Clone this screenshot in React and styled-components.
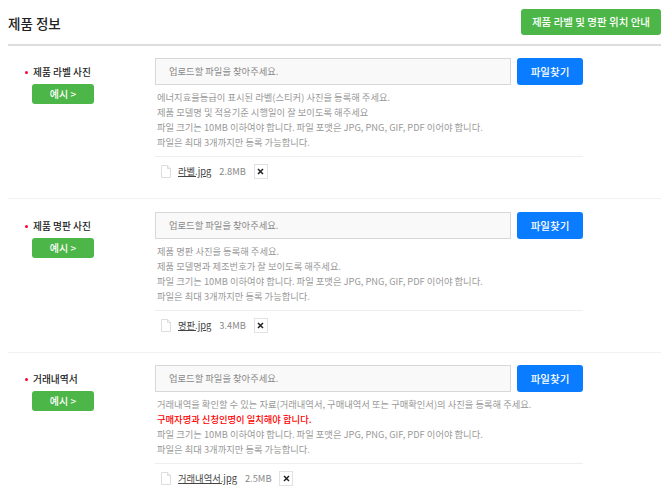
import React from "react";
import styled, { createGlobalStyle } from "styled-components";

const GlobalStyle = createGlobalStyle`
  html, body { margin: 0; padding: 0; background: #fff; }
  body { font-family: "Noto Sans CJK KR", "Noto Sans", sans-serif; overflow: hidden; }
`;

const Page = styled.div`
  width: 672px;
  height: 498px;
  overflow: hidden;
  padding: 9px 11px 0 8px;
  box-sizing: border-box;
`;

const Header = styled.div`
  display: flex;
  justify-content: space-between;
  align-items: flex-start;
  height: 35px;
  border-bottom: 2px solid #ddd;
`;

const Title = styled.h2`
  margin: 4px 0 0;
  font-size: 13.5px;
  line-height: 20px;
  font-weight: 500;
  color: #222;
`;

const GuideButton = styled.button`
  width: 140px;
  height: 26px;
  padding: 0;
  border: 0;
  border-radius: 3px;
  background: #4db648;
  color: #fff;
  font: 500 10.5px/26px "Noto Sans CJK KR", sans-serif;
`;

const Section = styled.section`
  display: grid;
  grid-template-columns: 147px 428px;
  height: ${(p) => p.$height}px;
  padding-top: ${(p) => p.$top}px;
  box-sizing: border-box;
  border-bottom: ${(p) => (p.$last ? "0" : "1px solid #f1f1f1")};
`;

const LabelColumn = styled.div`
  padding: 5px 0 0 17px;
`;

const Label = styled.div`
  display: flex;
  align-items: center;
  height: 18px;
  font-size: 9.7px;
  font-weight: 500;
  color: #222;
`;

const Bullet = styled.span`
  width: 3px;
  height: 3px;
  margin-right: 5px;
  border-radius: 50%;
  background: #f03;
`;

const SampleButton = styled.button`
  display: block;
  width: 62px;
  height: 20px;
  margin: 3px 0 0 7px;
  padding: 0;
  border: 0;
  border-radius: 3px;
  background: #4db648;
  color: #fff;
  font: 500 10px/20px "Noto Sans CJK KR", sans-serif;
`;

const UploadRow = styled.div`
  display: flex;
  gap: 6px;
`;

const Field = styled.div`
  width: 356px;
  height: 27px;
  padding-left: 13px;
  box-sizing: border-box;
  border: 1px solid #d8d8d8;
  background: #f9f9f9;
  color: #888;
  font-size: 9.3px;
  line-height: 25px;
`;

const FindButton = styled.button`
  width: 66px;
  height: 27px;
  padding: 0;
  border: 0;
  border-radius: 3px;
  background: #0a7cff;
  color: #fff;
  font: 500 10.5px/27px "Noto Sans CJK KR", sans-serif;
`;

const Notes = styled.ul`
  list-style: none;
  margin: 5px 0 0;
  padding: 0 0 6px 2px;
  border-bottom: 1px solid #eee;
`;

const Note = styled.li`
  height: 15px;
  font-size: 9.3px;
  line-height: 15px;
  white-space: nowrap;
  color: ${(p) => (p.$alert ? "#f00" : "#999")};
  font-weight: ${(p) => (p.$alert ? 500 : 400)};
`;

const FileRow = styled.div`
  display: flex;
  align-items: center;
  height: 28px;
  padding-left: 6px;
  font-size: 9.3px;
`;

const FileName = styled.a`
  margin-left: 7px;
  color: #444;
  text-decoration: underline;
`;

const FileSize = styled.span`
  margin-left: 8px;
  color: #888;
`;

const RemoveButton = styled.button`
  display: flex;
  align-items: center;
  justify-content: center;
  width: 14px;
  height: 15px;
  margin-left: 8px;
  padding: 0;
  border: 1px solid #e2e2e2;
  background: #fff;
`;

const FileIcon = () => (
  <svg width="10" height="13" viewBox="0 0 10 13" fill="none" stroke="#ddd">
    <path d="M.5.5h6l3 3v9H.5z M6.5.5v3h3" />
  </svg>
);

const CloseIcon = () => (
  <svg width="7" height="7" viewBox="0 0 7 7" stroke="#222" strokeWidth="1.5">
    <path d="M1 1l5 5M6 1l-5 5" />
  </svg>
);

const commonNotes = [
  "파일 크기는 10MB 이하여야 합니다. 파일 포맷은 JPG, PNG, GIF, PDF 이어야 합니다.",
  "파일은 최대 3개까지만 등록 가능합니다.",
];

const sections = [
  {
    label: "제품 라벨 사진",
    notes: [
      { text: "에너지효율등급이 표시된 라벨(스티커) 사진을 등록해 주세요." },
      { text: "제품 모델명 및 적용기준 시행일이 잘 보이도록 해주세요" },
    ],
    file: "라벨.jpg",
    size: "2.8MB",
    top: 12,
    height: 153,
  },
  {
    label: "제품 명판 사진",
    notes: [
      { text: "제품 명판 사진을 등록해 주세요." },
      { text: "제품 모델명과 제조번호가 잘 보이도록 해주세요." },
    ],
    file: "명판.jpg",
    size: "3.4MB",
    top: 13,
    height: 154,
  },
  {
    label: "거래내역서",
    notes: [
      { text: "거래내역을 확인할 수 있는 자료(거래내역서, 구매내역서 또는 구매확인서)의 사진을 등록해 주세요." },
      { text: "구매자명과 신청인명이 일치해야 합니다.", alert: true },
    ],
    file: "거래내역서.jpg",
    size: "2.5MB",
    top: 12,
    height: 146,
    last: true,
  },
];

export default function App() {
  return (
    <Page>
      <GlobalStyle />
      <Header>
        <Title>제품 정보</Title>
        <GuideButton>제품 라벨 및 명판 위치 안내</GuideButton>
      </Header>
      {sections.map((s) => (
        <Section key={s.label} $top={s.top} $height={s.height} $last={s.last}>
          <LabelColumn>
            <Label>
              <Bullet />
              {s.label}
            </Label>
            <SampleButton>예시 &gt;</SampleButton>
          </LabelColumn>
          <div>
            <UploadRow>
              <Field>업로드할 파일을 찾아주세요.</Field>
              <FindButton>파일찾기</FindButton>
            </UploadRow>
            <Notes>
              {s.notes.map((n) => (
                <Note key={n.text} $alert={n.alert}>{n.text}</Note>
              ))}
              {commonNotes.map((n) => (
                <Note key={n}>{n}</Note>
              ))}
            </Notes>
            <FileRow>
              <FileIcon />
              <FileName>{s.file}</FileName>
              <FileSize>{s.size}</FileSize>
              <RemoveButton><CloseIcon /></RemoveButton>
            </FileRow>
          </div>
        </Section>
      ))}
    </Page>
  );
}
